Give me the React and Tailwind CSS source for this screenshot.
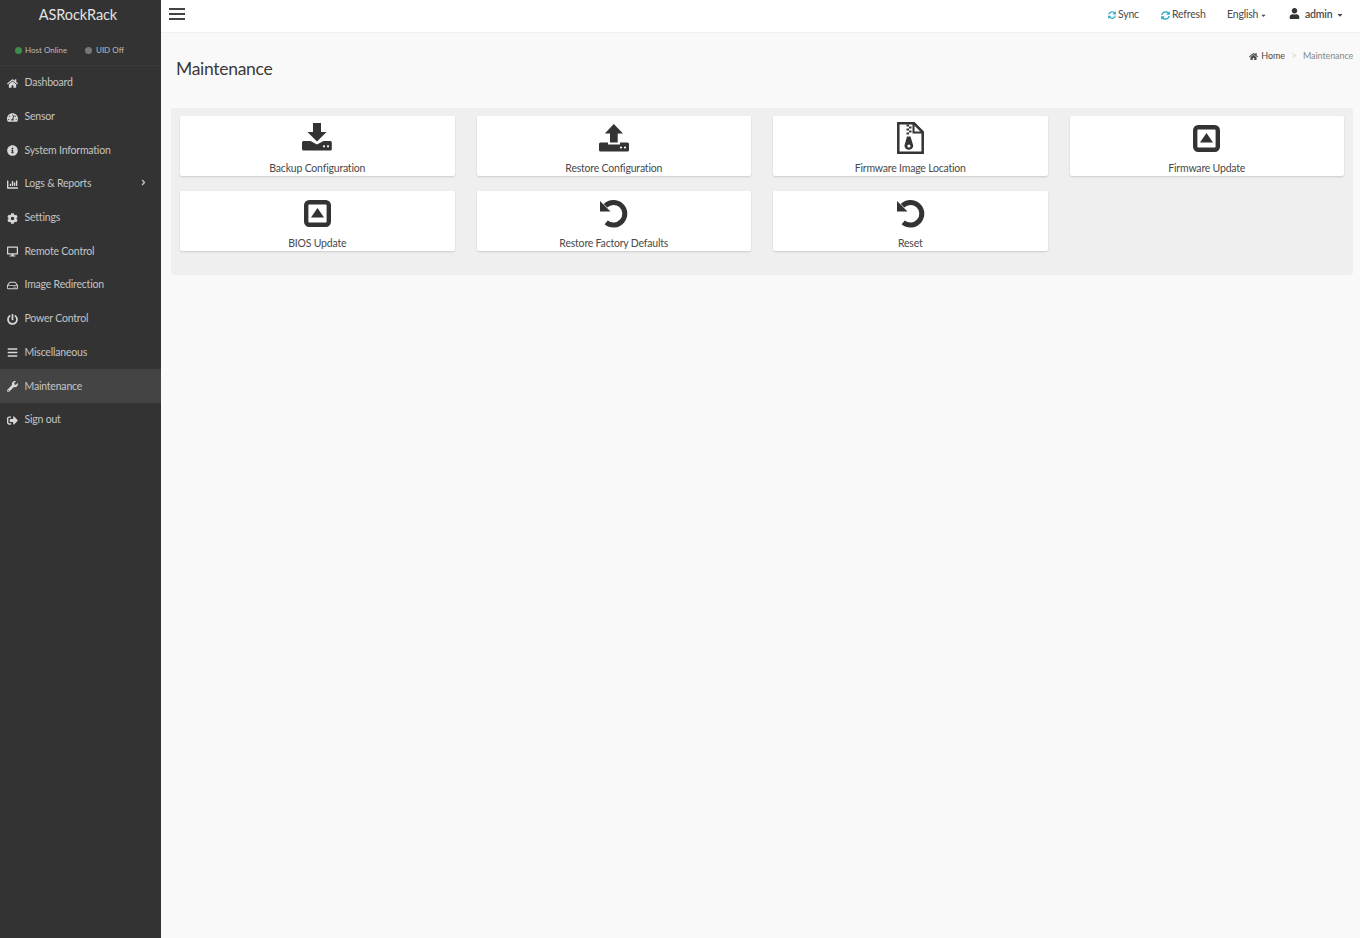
import React from 'react';
import {
  FaHome, FaTachometerAlt, FaInfoCircle, FaChartBar, FaCog, FaDesktop, FaRegHdd, FaPowerOff, FaBars,
  FaWrench, FaSignOutAlt, FaUser, FaSyncAlt, FaAngleRight, FaCaretDown,
} from 'react-icons/fa';

const navItems = [
  { label: 'Dashboard', icon: FaHome },
  { label: 'Sensor', icon: FaTachometerAlt },
  { label: 'System Information', icon: FaInfoCircle },
  { label: 'Logs & Reports', icon: FaChartBar, arrow: true },
  { label: 'Settings', icon: FaCog },
  { label: 'Remote Control', icon: FaDesktop },
  { label: 'Image Redirection', icon: FaRegHdd },
  { label: 'Power Control', icon: FaPowerOff },
  { label: 'Miscellaneous', icon: FaBars },
  { label: 'Maintenance', icon: FaWrench, active: true },
  { label: 'Sign out', icon: FaSignOutAlt },
];

const DownloadIcon = () => (
  <svg width="30" height="28" viewBox="0 0 30 28" className="mb-[3px] text-[#333333]" fill="currentColor">
    <path d="M11 0H19V9H24.5L15 18.5 5.5 9H11Z" />
    <path d="M1.5 18H8.5L15 21.5 21.5 18H28.5Q29.8 18 29.8 19.5V26Q29.8 27.5 28.3 27.5H1.5Q0 27.5 0 26V19.5Q0 18 1.5 18Z" />
    <circle cx="22" cy="23.3" r="1.1" fill="#fff" />
    <circle cx="26" cy="23.3" r="1.1" fill="#fff" />
  </svg>
);

const UploadIcon = () => (
  <svg width="30" height="28" viewBox="0 0 30 28" className="text-[#333333]" fill="currentColor">
    <path d="M14.8 0L24 9.5H18.7V18.5H11V9.5H5.8Z" />
    <path d="M1.5 18.5H9V20.5H21V18.5H28.5Q30 18.5 30 20V26Q30 27.5 28.5 27.5H1.5Q0 27.5 0 26V20Q0 18.5 1.5 18.5Z" />
    <circle cx="22" cy="23.5" r="1.1" fill="#fff" />
    <circle cx="26" cy="23.5" r="1.1" fill="#fff" />
  </svg>
);

const ArchiveIcon = () => (
  <svg width="27" height="32" viewBox="0 0 27 32" className="text-[#333333]" fill="none" stroke="currentColor">
    <path d="M1.3 1.3H17L25.7 10V30.7H1.3Z" strokeWidth="2.5" />
    <path d="M16.5 1.3V10.5H25.7" strokeWidth="2" />
    <g fill="currentColor" stroke="none">
      <rect x="9.5" y="2.5" width="2.5" height="2" />
      <rect x="12" y="4.5" width="2.5" height="2" />
      <rect x="9.5" y="6.5" width="2.5" height="2" />
      <rect x="12" y="8.5" width="2.5" height="2" />
      <rect x="9.5" y="10.5" width="2.5" height="2" />
      <path d="M10 14.5H13.5L16.2 23.5A4.3 4.3 0 1 1 7.5 23.5Z" />
    </g>
    <circle cx="11.9" cy="24" r="1.6" fill="#fff" stroke="none" />
  </svg>
);

const UpdateIcon = () => (
  <svg width="27" height="27" viewBox="0 0 27 27" className="text-[#333333]" fill="currentColor">
    <rect x="2.2" y="2.2" width="22.6" height="22.6" rx="3" fill="none" stroke="currentColor" strokeWidth="4.4" />
    <path d="M13.5 8L20 17.5H7Z" />
  </svg>
);

const UndoIcon = () => (
  <svg width="31" height="31" viewBox="0 0 31 31" className="text-[#333333]" fill="currentColor">
    <path d="M7.5 7.7A11.3 11.3 0 1 1 8.2 24.3" fill="none" stroke="currentColor" strokeWidth="5" />
    <path d="M2 3V13.5H12.5Z" />
  </svg>
);

const cards = [
  { label: 'Backup Configuration', icon: DownloadIcon },
  { label: 'Restore Configuration', icon: UploadIcon },
  { label: 'Firmware Image Location', icon: ArchiveIcon },
  { label: 'Firmware Update', icon: UpdateIcon },
  { label: 'BIOS Update', icon: UpdateIcon },
  { label: 'Restore Factory Defaults', icon: UndoIcon },
  { label: 'Reset', icon: UndoIcon },
];

const Sidebar = () => (
  <aside className="w-[161px] shrink-0 bg-[#333333] text-[#c4c4c4]">
    <div className="h-[29px] flex items-center justify-center pr-[5px] text-[14.5px] tracking-[-0.1px] text-[#e4e4e4]">ASRockRack</div>
    <div className="h-[37px] pt-[6px] flex items-center pl-[15px] text-[8px] whitespace-nowrap text-[#bdbdbd] border-b border-[#3a3a3a]">
      <span className="w-[7px] h-[7px] rounded-full bg-[#3c8c4a] mr-[3px]" />
      <span className="w-[60px]">Host Online</span>
      <span className="w-[7px] h-[7px] rounded-full bg-[#777777] mr-[4px]" />
      <span>UID Off</span>
    </div>
    <nav>
      {navItems.map((item) => {
        const Icon = item.icon;
        return (
          <div
            key={item.label}
            className={`h-[33.68px] pt-[1px] flex items-center pl-[7px] text-[10.5px] tracking-[-0.2px] ${item.active ? 'bg-[#444444]' : ''}`}
          >
            <Icon className="w-[11px] h-[11px] text-[#d8d8d8] shrink-0" />
            <span className="ml-[6.5px]">{item.label}</span>
            {item.arrow && <FaAngleRight className="w-[9px] h-[9px] ml-auto mr-[13px] mb-[3px]" />}
          </div>
        );
      })}
    </nav>
  </aside>
);

const Topbar = () => (
  <header className="h-[33px] bg-white border-b border-[#f0f0f0] flex items-center pl-[8px] pr-[16px] text-[10.5px] tracking-[-0.2px] text-[#4a4a4a]">
    <div className="flex flex-col gap-[3.5px] mb-[4px]">
      <span className="block w-[16px] h-[1.5px] bg-[#444444]" />
      <span className="block w-[16px] h-[1.5px] bg-[#444444]" />
      <span className="block w-[16px] h-[1.5px] bg-[#444444]" />
    </div>
    <div className="ml-auto flex items-center mb-[2px]">
      <FaSyncAlt className="w-[8px] h-[8px] text-[#2aa9c9]" />
      <span className="ml-[2px] w-[20px]">Sync</span>
      <FaSyncAlt className="w-[9px] h-[9px] text-[#2aa9c9] ml-[23px]" />
      <span className="ml-[2px] w-[33px]">Refresh</span>
      <span className="ml-[22px] w-[33px]">English</span>
      <FaCaretDown className="w-[7px] h-[7px]" />
      <FaUser className="w-[11px] h-[11px] ml-[22px] mb-[3px] text-[#333333]" />
      <span className="ml-[5px] w-[29px] font-semibold">admin</span>
      <FaCaretDown className="w-[8px] h-[8px] ml-[2px]" />
    </div>
  </header>
);

const App = () => (
  <div className="h-screen flex overflow-hidden bg-[#f9f9f9]" style={{ fontFamily: 'Lato, "Noto Sans", sans-serif' }}>
    <Sidebar />
    <div className="flex-1 min-w-0">
      <Topbar />
      <div className="h-[75px] pl-[15px] pr-[8px] flex justify-between">
        <h1 className="mt-[24px] text-[17.5px] tracking-[-0.3px] leading-[24px] text-[#3a3a3a]">Maintenance</h1>
        <div className="mt-[17px] h-[12px] flex items-center text-[9px] tracking-[-0.1px] text-[#4a4a4a]">
          <FaHome className="w-[9px] h-[9px] mr-[3px]" />
          <span>Home</span>
          <span className="mx-[6.5px] text-[#d0d0d0]">&gt;</span>
          <span className="w-[49px] text-[#888888]">Maintenance</span>
        </div>
      </div>
      <section className="ml-[10px] mr-[7px] h-[167px] rounded-[3px] bg-[#efefef] px-[9px] py-[8px]">
        <div className="grid grid-cols-4 gap-x-[22px] gap-y-[15px]">
          {cards.map((card) => {
            const Icon = card.icon;
            return (
              <div key={card.label} className="h-[60px] bg-white rounded-[2px] shadow-[0_1px_2px_rgba(0,0,0,0.15)] flex flex-col items-center">
                <div className="h-[44px] flex items-center justify-center">
                  <Icon />
                </div>
                <span className="mt-[1px] text-[10.5px] tracking-[-0.2px] leading-[14px] text-[#4a4a4a]">{card.label}</span>
              </div>
            );
          })}
        </div>
      </section>
    </div>
  </div>
);

export default App;
